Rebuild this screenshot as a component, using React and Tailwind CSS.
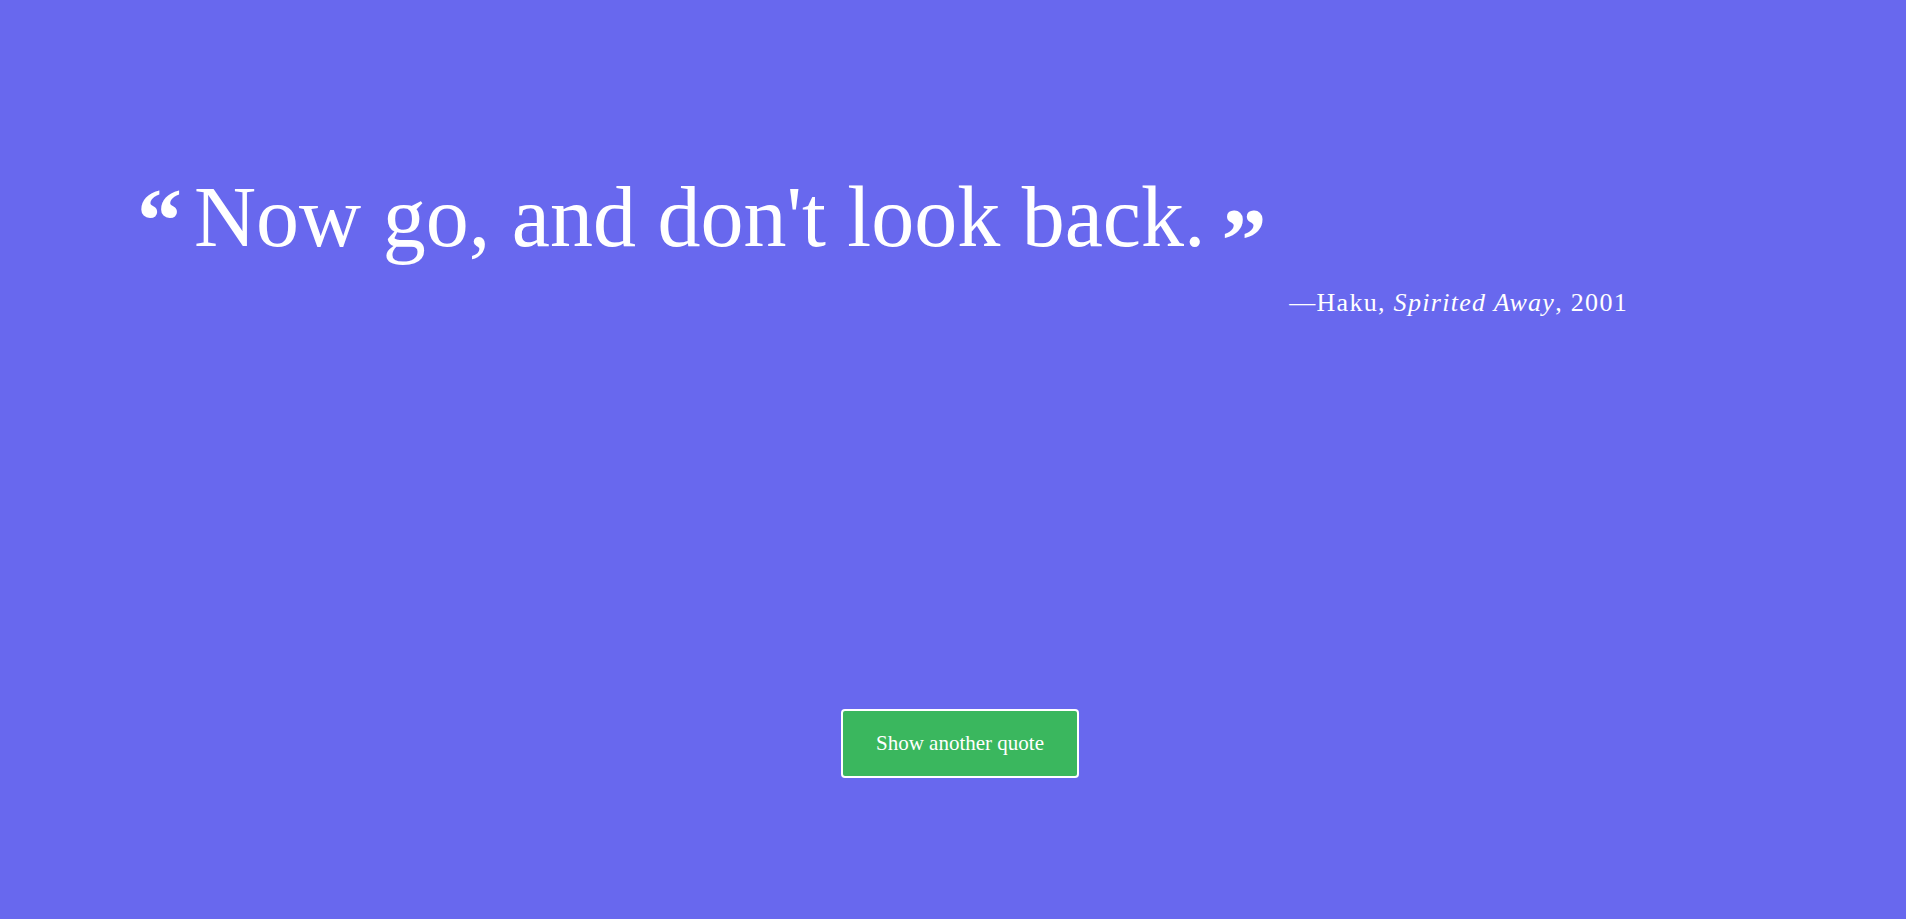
export default function App() {
  return (
    <div className="min-h-screen w-full bg-[#6868ee] text-white font-['Liberation_Serif',serif]">
      <main className="flex flex-col pt-[174px]">
        {/* quote */}
        <section className="pl-[137px] pr-[278px]">
          <blockquote className="text-[86px] leading-none whitespace-nowrap">
            <span className="mr-[12px] text-[90px] font-bold align-[-5px]">&ldquo;</span>
            Now go, and don't look back.
            <span className="ml-[16px] text-[90px] font-bold align-[-25px]">&rdquo;</span>
          </blockquote>
          <p className="mt-[-3px] text-right text-[26px] tracking-[1.3px]">
            &mdash;Haku, <em>Spirited Away</em>, 2001
          </p>
        </section>

        {/* next quote */}
        <div className="flex justify-center pl-[14px] mt-[387px]">
          <button className="w-[238px] h-[69px] rounded-[4px] border-2 border-white bg-[#3ab75e] text-[21px] text-white">
            Show another quote
          </button>
        </div>
      </main>
    </div>
  );
}
